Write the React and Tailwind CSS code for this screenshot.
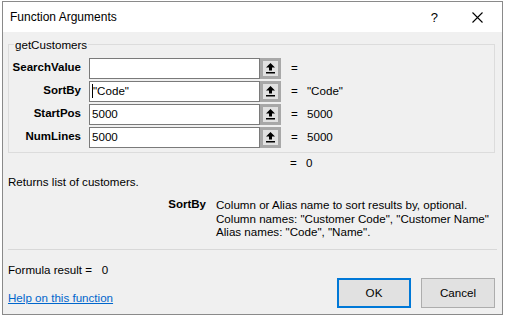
import React from "react";

const args = [
  { name: "SearchValue", value: "", result: "" },
  { name: "SortBy", value: "\"Code\"", result: "\"Code\"", caret: true },
  { name: "StartPos", value: "5000", result: "5000" },
  { name: "NumLines", value: "5000", result: "5000" },
];

const RefIcon = () => (
  <svg width="11" height="12" viewBox="0 0 11 12">
    <path d="M5.5 1 L10 5.5 L7 5.5 L7 8.5 L4 8.5 L4 5.5 L1 5.5 Z" fill="#000" />
    <rect x="1" y="10" width="9" height="1.5" fill="#000" />
  </svg>
);

const ArgRow = ({ arg }) => (
  <div className="flex items-center h-[21px]">
    <div className="w-[72px] text-right font-bold text-[11.5px]">{arg.name}</div>
    <div className="ml-[8px] w-[171px] h-[21px] bg-white border border-[#7a7a7a] flex items-center pl-[2px]">
      {arg.caret && <span className="inline-block w-px h-[14px] bg-black"></span>}
      <span>{arg.value}</span>
    </div>
    <div className="w-[21px] h-[21px] bg-[#e1e1e1] border-[3px] border-[#a8a8a8] flex items-center justify-center">
      <RefIcon />
    </div>
    <div className="ml-[10px] w-[16px]">=</div>
    <div>{arg.result}</div>
  </div>
);

export default function App() {
  return (
    <div className="w-[505px] h-[316px] bg-white pt-[1px] pl-[2px] font-['Liberation_Sans',Arial,sans-serif] text-[11.6px] text-black leading-none">
      <div className="w-[501px] h-[314px] border border-[#8a8a8a] bg-[#f0f0f0] flex flex-col overflow-hidden">
        <div className="h-[30px] bg-white flex items-center pl-[7px] shrink-0">
          <span className="text-[12px]">Function Arguments</span>
          <span className="ml-auto mr-[34px] text-[13px]">?</span>
          <svg width="11" height="11" viewBox="0 0 11 11" className="mr-[19px]">
            <path d="M0.5 0.5 L10.5 10.5 M10.5 0.5 L0.5 10.5" stroke="#000" strokeWidth="1.1" />
          </svg>
        </div>

        <div className="flex flex-col pl-[5px] pr-[7px]">
          <fieldset className="mt-[7px] border border-[#dcdcdc] h-[114px] px-0 pt-[7px] pb-0">
            <legend className="ml-[5px] px-[1px]">getCustomers</legend>
            <div className="flex flex-col gap-[2px]">
              {args.map((a) => (
                <ArgRow key={a.name} arg={a} />
              ))}
            </div>
          </fieldset>

          <div className="flex h-[14px] items-center mt-[3px]">
            <span className="ml-[282px] w-[16px]">=</span>
            <span>0</span>
          </div>

          <div className="mt-[5px] h-[14px] flex items-center">Returns list of customers.</div>

          <div className="flex mt-[9px] leading-[13.5px]">
            <div className="w-[198px] text-right font-bold text-[11.5px]">SortBy</div>
            <div className="ml-[10px] whitespace-nowrap">
              <div>Column or Alias name to sort results by, optional.</div>
              <div>Column names: "Customer Code", "Customer Name"</div>
              <div>Alias names: "Code", "Name".</div>
            </div>
          </div>

          <div className="mt-[10px] border-t border-[#d8d8d8] mr-[-2px]"></div>

          <div className="mt-[13px] h-[14px] flex items-center">Formula result =&nbsp;&nbsp;&nbsp;0</div>

          <div className="flex items-end mt-[1px]">
            <a className="text-[#0066cc] underline mb-[4px]">Help on this function</a>
            <div className="ml-auto flex gap-[10px]">
              <button className="w-[74px] h-[30px] bg-[#e1e1e1] border-2 border-[#0078d7]">OK</button>
              <button className="w-[74px] h-[30px] bg-[#e1e1e1] border border-[#adadad]">Cancel</button>
            </div>
          </div>
        </div>
      </div>
    </div>
  );
}
